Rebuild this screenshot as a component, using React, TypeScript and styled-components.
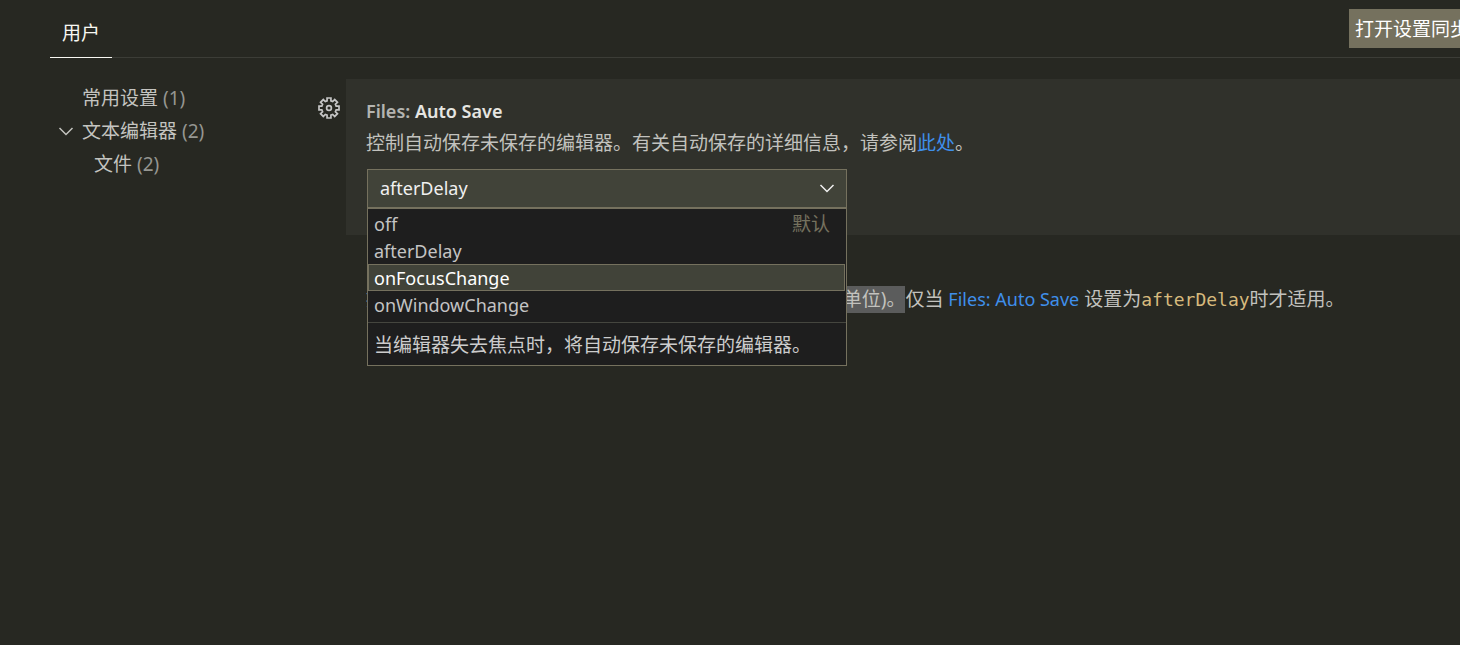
import React from "react";
import styled, { createGlobalStyle } from "styled-components";

const GlobalStyle = createGlobalStyle`
  * { box-sizing: border-box; }
  body {
    margin: 0;
    background: #272822;
    color: #cccccc;
    font-family: "Noto Sans", "Noto Sans CJK SC", sans-serif;
    font-size: 19px;
    line-height: 27px;
    overflow: hidden;
  }
`;

const Page = styled.div`
  min-height: 100vh;
  overflow: hidden;
`;

const Header = styled.header`
  display: flex;
  justify-content: space-between;
  align-items: stretch;
  height: 58px;
  margin-left: 50px;
  border-bottom: 1px solid #3c3d37;
`;

const Tab = styled.button`
  margin: 0 0 -1px;
  padding: 10px 12px 0;
  border: 0;
  border-bottom: 1px solid #f8f8f2;
  background: transparent;
  color: #f8f8f2;
  font: inherit;
`;

const SyncButton = styled.button`
  flex: none;
  height: 39px;
  margin: 9px -15px 0 0;
  padding: 2px 6px 0;
  border: 0;
  background: #75715e;
  color: #ffffff;
  font: inherit;
  white-space: nowrap;
`;

const Body = styled.div`
  display: grid;
  grid-template-columns: 346px 1fr;
  padding-top: 21px;
`;

const Toc = styled.ul`
  margin: 0;
  padding: 3px 0 0 56px;
  list-style: none;
`;

const TocRow = styled.li<{ $nested?: boolean }>`
  display: flex;
  align-items: center;
  gap: 6px;
  height: 33px;
  padding-left: ${(p) => (p.$nested ? 12 : 0)}px;
  color: #c4c4c0;
`;

const Twistie = styled.span`
  display: flex;
  width: 20px;
  height: 20px;
`;

const Count = styled.span`
  color: #959691;
  margin-left: 5px;
`;

const Settings = styled.main`
  min-width: 0;
`;

const Setting = styled.section<{ $focused?: boolean }>`
  position: relative;
  height: 156px;
  padding: 19px 20px 0;
  background: ${(p) => (p.$focused ? "#30312b" : "transparent")};
`;

const GearButton = styled.button`
  position: absolute;
  top: 17px;
  left: -29px;
  display: flex;
  padding: 0;
  border: 0;
  background: transparent;
  color: #c5c5c5;
`;

const Title = styled.h2`
  margin: 0;
  font-size: 18px;
  font-weight: 600;
  color: #e6e6e2;
`;

const Category = styled.span`
  color: #b4b4b0;
`;

const Description = styled.p`
  margin: 5px 0 0;
  color: #c2c2be;
  white-space: nowrap;
`;

const Link = styled.a`
  color: #3f8fea;
  text-decoration: none;
`;

const LatinLink = styled(Link)`
  font-size: 18px;
`;

const Selected = styled.span`
  display: inline-block;
  background: #5b5c5c;
`;

const Code = styled.code`
  color: #d7ba7d;
  font-family: "DejaVu Sans Mono", monospace;
  font-size: 18px;
`;

const Dropdown = styled.div`
  position: relative;
  width: 480px;
  margin: 12px 0 0 1px;
`;

const Select = styled.select`
  display: block;
  width: 100%;
  height: 39px;
  padding: 0 12px;
  border: 1px solid #75715e;
  border-radius: 0;
  appearance: none;
  background: #414339;
  color: #f0f0f0;
  font: inherit;
  font-size: 18px;
`;

const Chevron = styled.span`
  position: absolute;
  top: 10px;
  right: 10px;
  display: flex;
  color: #f0f0f0;
  pointer-events: none;
`;

const Menu = styled.div`
  position: absolute;
  z-index: 1;
  top: 100%;
  left: 0;
  width: 100%;
  border: 1px solid #75715e;
  background: #1e1e1e;
`;

const Options = styled.ul`
  margin: 0;
  padding: 1px 1px 4px 0;
  list-style: none;
`;

const Option = styled.li<{ $active?: boolean }>`
  display: flex;
  justify-content: space-between;
  align-items: center;
  height: 27px;
  padding: 2px 14px 0 5px;
  border: 1px solid ${(p) => (p.$active ? "#75715e" : "transparent")};
  background: ${(p) => (p.$active ? "#414339" : "transparent")};
  color: ${(p) => (p.$active ? "#ffffff" : "#c4c4c4")};
  font-size: 18px;
`;

const Detail = styled.span`
  color: #75715e;
  font-size: 19px;
`;

const MenuNote = styled.p`
  margin: 0;
  padding: 9px 6px 6px;
  border-top: 1px solid #45463f;
  color: #cccccc;
  white-space: nowrap;
`;

const ChevronIcon = () => (
  <svg width="20" height="20" viewBox="0 0 20 20" fill="none" stroke="currentColor" strokeWidth="1.5" aria-hidden="true">
    <path d="M3.5 6l6.5 6.5L16.5 6" />
  </svg>
);

const GearIcon = () => {
  const points: string[] = [];
  for (let i = 0; i < 8; i++) {
    const corners = [
      [-15, 7.4],
      [-11, 10.2],
      [11, 10.2],
      [15, 7.4],
    ];
    corners.forEach(([offset, radius]) => {
      const angle = ((i * 45 + offset) * Math.PI) / 180;
      points.push(`${(12 + radius * Math.sin(angle)).toFixed(2)},${(12 - radius * Math.cos(angle)).toFixed(2)}`);
    });
  }
  return (
    <svg width="24" height="24" viewBox="0 0 24 24" fill="none" stroke="currentColor" strokeWidth="1.7" aria-hidden="true">
      <polygon points={points.join(" ")} />
      <circle cx="12" cy="12" r="2.4" />
    </svg>
  );
};

const options = [
  { value: "off", detail: "默认" },
  { value: "afterDelay" },
  { value: "onFocusChange" },
  { value: "onWindowChange" },
];

export default function App() {
  return (
    <Page>
      <GlobalStyle />
      <Header>
        <Tab>用户</Tab>
        <SyncButton>打开设置同步</SyncButton>
      </Header>
      <Body>
        <Toc>
          <TocRow>
            <Twistie />
            <span>常用设置<Count>(1)</Count></span>
          </TocRow>
          <TocRow>
            <Twistie><ChevronIcon /></Twistie>
            <span>文本编辑器<Count>(2)</Count></span>
          </TocRow>
          <TocRow $nested>
            <Twistie />
            <span>文件<Count>(2)</Count></span>
          </TocRow>
        </Toc>
        <Settings>
          <Setting $focused>
            <GearButton aria-label="更多操作"><GearIcon /></GearButton>
            <Title id="auto-save"><Category>Files:</Category> Auto Save</Title>
            <Description>
              控制自动保存未保存的编辑器。有关自动保存的详细信息，请参阅<Link href="#docs">此处</Link>。
            </Description>
            <Dropdown>
              <Select aria-labelledby="auto-save" defaultValue="afterDelay">
                {options.map((o) => (
                  <option key={o.value}>{o.value}</option>
                ))}
              </Select>
              <Chevron><ChevronIcon /></Chevron>
              <Menu>
                <Options role="listbox" aria-labelledby="auto-save">
                  {options.map((o) => (
                    <Option
                      key={o.value}
                      role="option"
                      aria-selected={o.value === "onFocusChange"}
                      $active={o.value === "onFocusChange"}
                    >
                      {o.value}
                      {o.detail && <Detail>{o.detail}</Detail>}
                    </Option>
                  ))}
                </Options>
                <MenuNote>当编辑器失去焦点时，将自动保存未保存的编辑器。</MenuNote>
              </Menu>
            </Dropdown>
          </Setting>
          <Setting>
            <Title><Category>Files:</Category> Auto Save Delay</Title>
            <Description>
              控制延迟多少毫秒后, 自动保存未保存的编辑器 <Selected>(以毫秒为单位)。</Selected>仅当{" "}
              <LatinLink href="#auto-save">Files: Auto Save</LatinLink> 设置为<Code>afterDelay</Code>时才适用。
            </Description>
          </Setting>
        </Settings>
      </Body>
    </Page>
  );
}
